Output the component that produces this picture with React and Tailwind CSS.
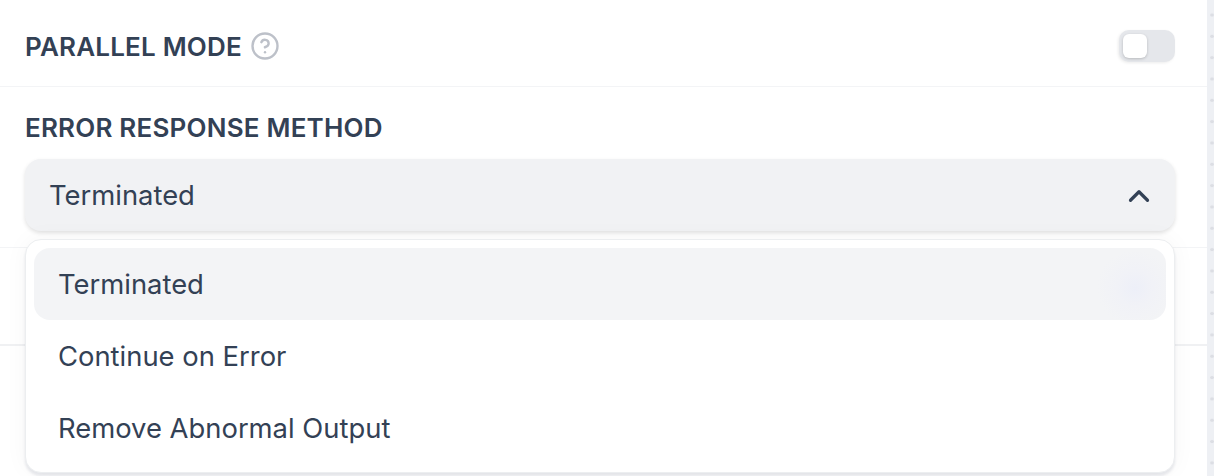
import { ChevronUp, CircleHelp } from 'lucide-react'

const options = ['Terminated', 'Continue on Error', 'Remove Abnormal Output']

const App = () => {
  return (
    <div className="flex h-[476px] w-[1214px] overflow-hidden bg-white font-['Inter',sans-serif] text-[#334155]">
      <div className="flex-1 min-w-0">
        <div className="h-[87px] flex items-center justify-between pl-[25px] pr-[32px] pt-[6px] border-b border-[#f3f4f6]">
          <div className="flex items-center gap-[10px]">
            <span className="text-[26px] leading-8 font-semibold uppercase tracking-[0.2px] pt-px">Parallel Mode</span>
            <CircleHelp size={30} strokeWidth={1.9} className="text-[#bdc1c9] -ml-[2px]" />
          </div>
          <div className="w-14 h-8 rounded-[10px] bg-[#e5e7eb] p-1 shadow-[-1px_1px_3px_rgba(0,0,0,0.08)]">
            <div className="w-6 h-6 rounded-md bg-white shadow-[0_1px_3px_rgba(0,0,0,0.2)]" />
          </div>
        </div>

        <div className="h-[161px] pl-[25px] pr-[32px] pt-[25px] border-b border-[#f3f4f6]">
          <div className="text-[26px] leading-8 font-semibold uppercase tracking-[0.2px]">Error Response Method</div>
          <div className="relative mt-[15px]">
            <button className="w-full h-[72px] px-[24px] pt-px flex items-center justify-between rounded-2xl bg-[#f1f2f4] shadow-[0_2px_4px_rgba(0,0,0,0.12)] text-[27.4px]">
              <span>Terminated</span>
              <ChevronUp size={34} strokeWidth={2.25} className="-mr-[5px]" />
            </button>

            <div className="absolute z-10 left-0 right-0 top-[80px] h-[234px] p-2 rounded-2xl bg-white border border-[#eceef0] shadow-[0_3px_3px_rgba(30,41,80,0.1),0_0_24px_rgba(0,0,0,0.04)]">
              {options.map((option, i) => (
                <div
                  key={option}
                  className={`h-[72px] px-[24px] pt-px flex items-center rounded-2xl text-[27.4px] ${i === 0 ? 'bg-[radial-gradient(circle_at_1101px_40px,#edeff8_0,#f1f2f7_18px,#f3f4f6_38px)]' : ''}`}
                >
                  {option}
                </div>
              ))}
            </div>
          </div>
        </div>

        <div className="h-[98px] border-b-2 border-[#f0f1f3]" />
        <div className="h-[130px]" />
      </div>

      <div className="w-[7px] shrink-0 bg-[#eef0f4] bg-[radial-gradient(circle_at_5px_15px,#dcdee4_1.5px,transparent_2px)] bg-size-[7px_21.33px]" />
    </div>
  )
}

export default App
